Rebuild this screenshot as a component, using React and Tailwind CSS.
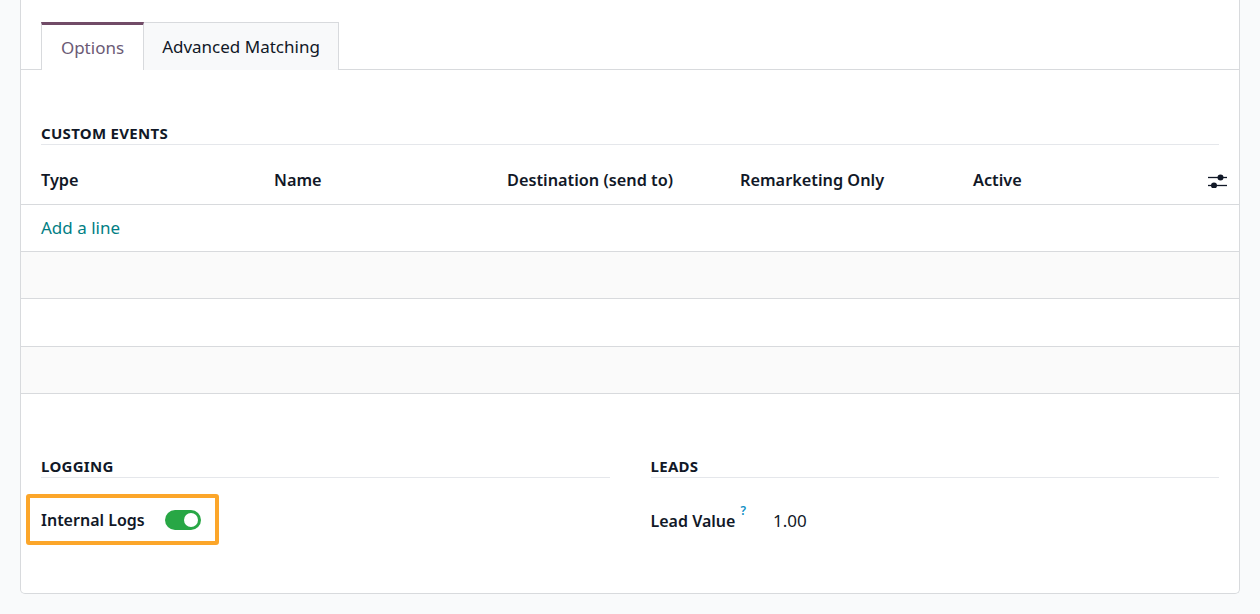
import { useState } from "react";

const columns = ["Type", "Name", "Destination (send to)", "Remarketing Only", "Active"];

function AdjustIcon() {
  return (
    <svg width="19" height="14" viewBox="0 0 19 14" className="text-[#111827]">
      <line x1="0" y1="3.5" x2="19" y2="3.5" stroke="currentColor" strokeWidth="1.3" />
      <line x1="0" y1="11.5" x2="19" y2="11.5" stroke="currentColor" strokeWidth="1.3" />
      <circle cx="12.5" cy="3.5" r="3" fill="currentColor" />
      <circle cx="6" cy="11.5" r="3" fill="currentColor" />
    </svg>
  );
}

function Toggle({ on, onChange }) {
  return (
    <button
      onClick={() => onChange(!on)}
      className={`relative w-9 h-5 rounded-full ${on ? "bg-[#28a745]" : "bg-gray-300"}`}
    >
      <span
        className={`absolute top-[3px] w-[14px] h-[14px] rounded-full bg-white ${on ? "left-[19px]" : "left-[3px]"}`}
      />
    </button>
  );
}

function SectionTitle({ children }) {
  return (
    <div className="border-b border-[#e5e7eb] pb-[3px] text-[15px] leading-[16px] font-bold uppercase tracking-[0.3px] text-[#111827]">
      {children}
    </div>
  );
}

export default function App() {
  const [tab, setTab] = useState("options");
  const [logs, setLogs] = useState(true);

  return (
    <div
      className="min-h-[614px] bg-[#f9fafb] px-5 text-[17px] text-[#111827]"
      style={{ fontFamily: '"Noto Sans", sans-serif' }}
    >
      <div className="h-[594px] rounded-b-[5px] border-x border-b border-[#d8dadd] bg-white">
        {/* tabs */}
        <div className="flex border-b border-[#d8dadd] px-5 pt-[22px]">
          <button
            onClick={() => setTab("options")}
            className={`-mb-px h-[48px] w-[103px] border-x border-t-[3px] ${
              tab === "options"
                ? "border-x-[#d8dadd] border-t-[#714b67] bg-white text-[#6b5a75]"
                : "border-t-[#d8dadd] bg-[#f8f9fa] text-[#111827]"
            }`}
          >
            Options
          </button>
          <button
            onClick={() => setTab("matching")}
            className={`-mb-px h-[48px] w-[195px] border-r border-t ${
              tab === "matching"
                ? "border-t-[3px] border-t-[#714b67] border-r-[#d8dadd] bg-white text-[#6b5a75]"
                : "border-[#d8dadd] bg-[#f8f9fa] text-[#111827]"
            }`}
          >
            Advanced Matching
          </button>
        </div>

        {/* custom events */}
        <div className="px-5 pt-[55px]">
          <SectionTitle>Custom Events</SectionTitle>
        </div>
        <div className="mt-[12px]">
          <div className="flex h-[48px] items-center border-b border-[#d8dadd] pl-5 pr-[12px] text-[16.3px] font-semibold">
            {columns.map((c) => (
              <div key={c} className="w-[233px]">
                {c}
              </div>
            ))}
            <div className="ml-auto flex">
              <AdjustIcon />
            </div>
          </div>
          <div className="flex h-[47px] items-center border-b border-[#d8dadd] px-5">
            <button className="text-[#017e84]">Add a line</button>
          </div>
          <div className="h-[47px] border-b border-[#d8dadd] bg-[#fafafa]" />
          <div className="h-[48px] border-b border-[#d8dadd]" />
          <div className="h-[47px] border-b border-[#d8dadd] bg-[#fafafa]" />
        </div>

        {/* logging / leads */}
        <div className="mt-[64px] grid grid-cols-2 gap-x-[41px] px-5">
          <div>
            <SectionTitle>Logging</SectionTitle>
            <div className="-ml-[15px] mt-[16px] inline-flex h-[51px] items-center gap-[20px] rounded-[3px] border-[4px] border-[#fca62a] pl-[11px] pr-[14px] text-[16px] font-semibold">
              <span>Internal Logs</span>
              <Toggle on={logs} onChange={setLogs} />
            </div>
          </div>
          <div>
            <SectionTitle>Leads</SectionTitle>
            <div className="mt-[17px] flex h-[51px] items-center">
              <span className="text-[16px] font-semibold">Lead Value</span>
              <sup className="ml-[5px] -mt-2 text-[12px] font-semibold text-[#0d8ec4]">?</sup>
              <span className="ml-[27px]">1.00</span>
            </div>
          </div>
        </div>
      </div>
    </div>
  );
}
